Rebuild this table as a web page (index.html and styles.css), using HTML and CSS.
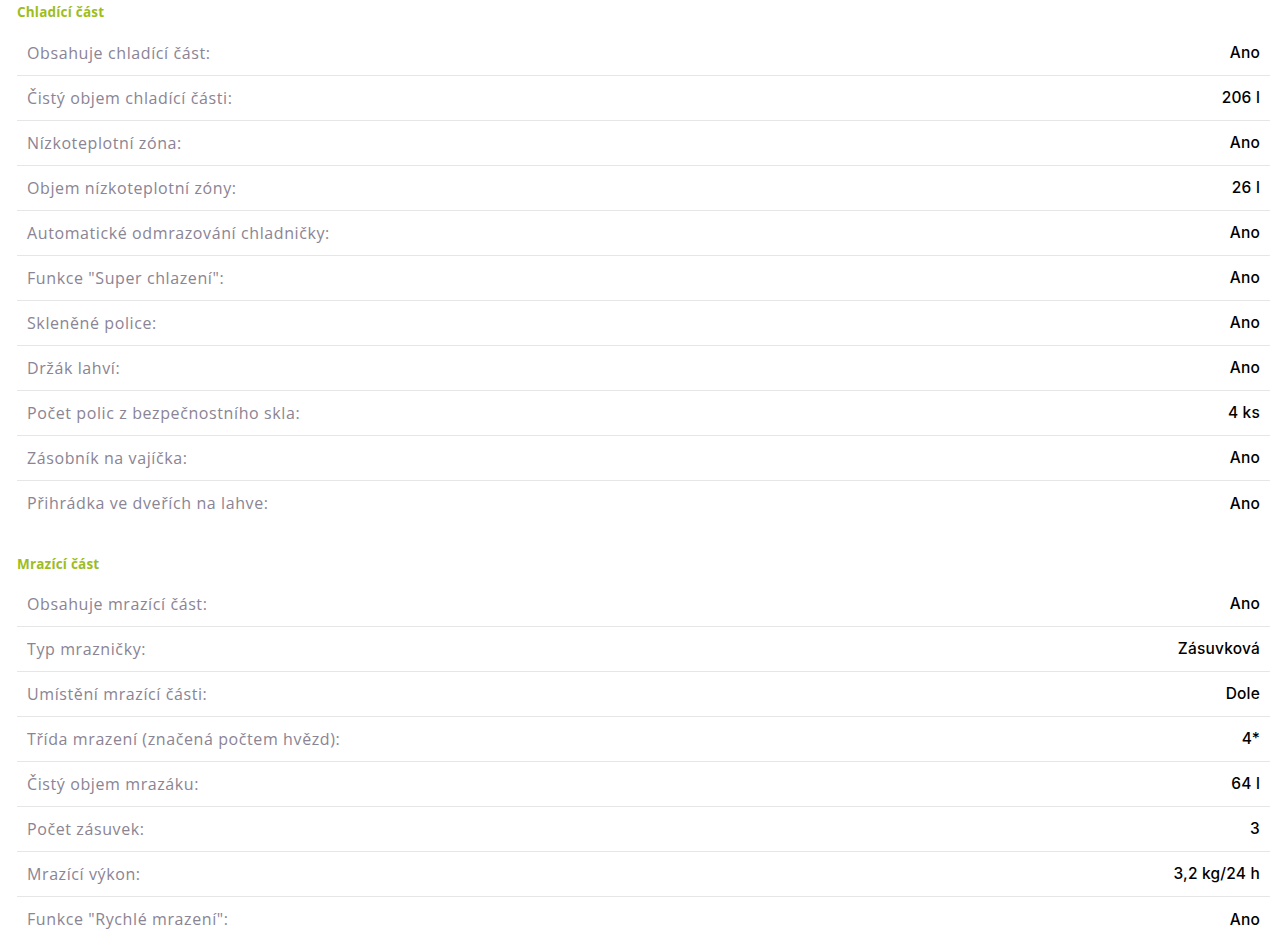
FILE: index.html
```html
<!DOCTYPE html>
<html lang="cs">
<head>
    <meta charset="UTF-8">
    <meta name="viewport" content="width=device-width, initial-scale=1.0">
    <title>Parametry</title>
    <link rel="stylesheet" href="styles.css">
</head>
<body>
    <div class="params">
        <!-- Chladící část -->
        <div class="param-group">
            <h3 class="param-title">Chladící část</h3>
            <div class="param-row"><span class="param-name">Obsahuje chladící část:</span><span class="param-value">Ano</span></div>
            <div class="param-row"><span class="param-name">Čistý objem chladící části:</span><span class="param-value">206 l</span></div>
            <div class="param-row"><span class="param-name">Nízkoteplotní zóna:</span><span class="param-value">Ano</span></div>
            <div class="param-row"><span class="param-name">Objem nízkoteplotní zóny:</span><span class="param-value">26 l</span></div>
            <div class="param-row"><span class="param-name">Automatické odmrazování chladničky:</span><span class="param-value">Ano</span></div>
            <div class="param-row"><span class="param-name">Funkce "Super chlazení":</span><span class="param-value">Ano</span></div>
            <div class="param-row"><span class="param-name">Skleněné police:</span><span class="param-value">Ano</span></div>
            <div class="param-row"><span class="param-name">Držák lahví:</span><span class="param-value">Ano</span></div>
            <div class="param-row"><span class="param-name">Počet polic z bezpečnostního skla:</span><span class="param-value">4 ks</span></div>
            <div class="param-row"><span class="param-name">Zásobník na vajíčka:</span><span class="param-value">Ano</span></div>
            <div class="param-row"><span class="param-name">Přihrádka ve dveřích na lahve:</span><span class="param-value">Ano</span></div>
        </div>

        <!-- Mrazící část -->
        <div class="param-group">
            <h3 class="param-title">Mrazící část</h3>
            <div class="param-row"><span class="param-name">Obsahuje mrazící část:</span><span class="param-value">Ano</span></div>
            <div class="param-row"><span class="param-name">Typ mrazničky:</span><span class="param-value">Zásuvková</span></div>
            <div class="param-row"><span class="param-name">Umístění mrazící části:</span><span class="param-value">Dole</span></div>
            <div class="param-row"><span class="param-name">Třída mrazení (značená počtem hvězd):</span><span class="param-value">4*</span></div>
            <div class="param-row"><span class="param-name">Čistý objem mrazáku:</span><span class="param-value">64 l</span></div>
            <div class="param-row"><span class="param-name">Počet zásuvek:</span><span class="param-value">3</span></div>
            <div class="param-row"><span class="param-name">Mrazící výkon:</span><span class="param-value">3,2 kg/24 h</span></div>
            <div class="param-row"><span class="param-name">Funkce "Rychlé mrazení":</span><span class="param-value">Ano</span></div>
        </div>
    </div>
</body>
</html>
```

FILE: styles.css
```css
/* Globalne style */
body {
    font-family: 'Open Sans', 'Noto Sans', sans-serif;
    background-color: #fff;
    color: #000;
    margin: 0;
}
.params {
    padding: 0 6px 0 17px;
}
.param-group {
    margin-bottom: 26px;
}
.param-title {
    margin: 0 0 7px 0;
    height: 24px;
    line-height: 24px;
    font-size: 13.5px;
    font-weight: 700;
    letter-spacing: 0.2px;
    color: #9dbd1e;
}
.param-group + .param-group .param-title {
    margin-bottom: 6px;
}
.param-row {
    display: flex;
    justify-content: space-between;
    align-items: center;
    height: 45px;
    padding: 0 10px 1px;
    border-bottom: 1px solid #e6e6e6;
    box-sizing: border-box;
    font-size: 16px;
}
.param-row:last-child {
    border-bottom: none;
}
.param-name {
    color: #8a8494;
    letter-spacing: 0.6px;
}
.param-value {
    font-family: Inter, 'Open Sans', sans-serif;
    font-size: 15.5px;
    font-weight: 500;
    letter-spacing: 0.2px;
    color: #000;
}
```
